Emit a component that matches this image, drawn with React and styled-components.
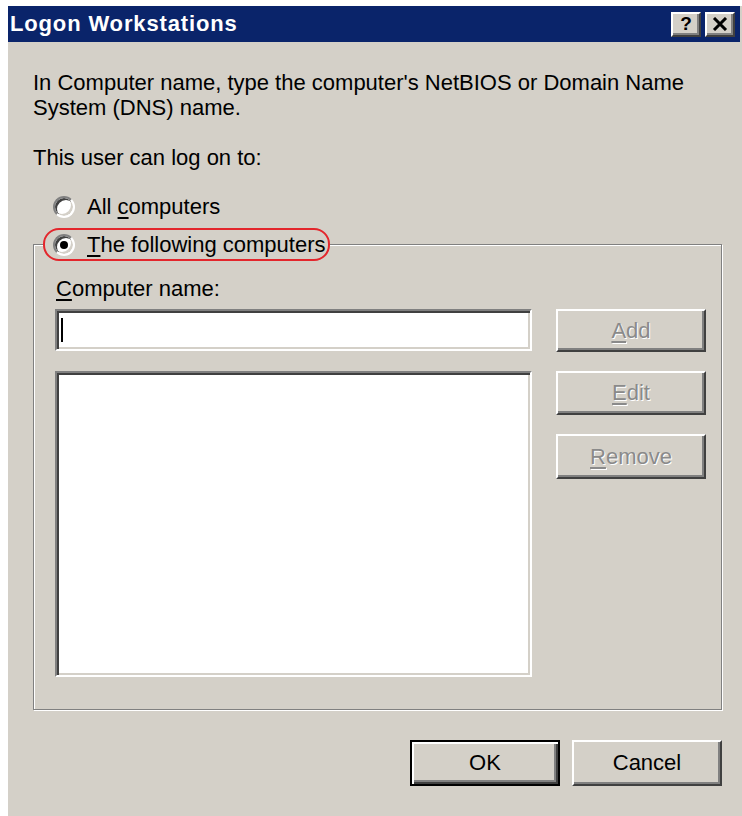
import React from 'react';
import styled, { createGlobalStyle, css } from 'styled-components';

const GlobalStyle = createGlobalStyle`
    html, body {
        margin: 0;
        padding: 0;
        background: #ffffff;
    }
    body {
        font-family: "Liberation Sans", Arial, sans-serif;
    }
`;

const face = '#d4d0c8';

const raised = css`
    border: 2px solid;
    border-color: #ffffff #404040 #404040 #ffffff;
    box-shadow: inset -2px -2px #808080;
`;

const sunken = css`
    border: 2px solid;
    border-color: #808080 #ffffff #ffffff #808080;
    box-shadow: inset 2px 2px #404040, inset -2px -2px ${face};
`;

const Window = styled.div`
    margin: 6px 0 0 8px;
    width: 734px;
    height: 810px;
    background: ${face};
    display: flex;
    flex-direction: column;
`;

const TitleBar = styled.div`
    height: 36px;
    background: #0a246a;
    display: flex;
    align-items: center;
    padding: 0 5px 0 2px;
    margin-right: 2px;
`;

const Title = styled.div`
    flex: 1;
    color: #ffffff;
    font-weight: bold;
    font-size: 22px;
    letter-spacing: 0.85px;
`;

const CaptionButton = styled.div`
    ${raised};
    width: 30px;
    height: 25px;
    box-sizing: border-box;
    background: ${face};
    display: flex;
    align-items: center;
    justify-content: center;
    margin-left: ${props => props.gap || 0}px;
    font-weight: bold;
    font-size: 19px;
    color: #000;
`;

const Body = styled.div`
    padding: 28px 20px 0 25px;
    display: flex;
    flex-direction: column;
    font-size: 22px;
    color: #000;
`;

const Text = styled.div`
    line-height: 25px;
    margin-bottom: ${props => props.mb || 0}px;
`;

const Key = styled.span`
    text-decoration: underline;
    text-underline-offset: 3px;
`;

const RadioRow = styled.label`
    display: flex;
    align-items: center;
    gap: 12px;
    height: ${props => props.h || 33}px;
    padding-left: ${props => props.indent || 0}px;
`;

const RadioDot = styled.span`
    width: 22px;
    height: 22px;
    box-sizing: border-box;
    border-radius: 50%;
    background: #fff;
    border: 2px solid;
    border-color: #808080 #ffffff #ffffff #808080;
    box-shadow: inset 2px 2px #404040, inset -2px -2px ${face};
    display: flex;
    align-items: center;
    justify-content: center;
    &::after {
        content: '';
        width: 8px;
        height: 8px;
        border-radius: 50%;
        background: ${props => props.checked ? '#000' : 'transparent'};
    }
`;

const Group = styled.fieldset`
    margin: 5px 0 0 0;
    padding: 0 15px 32px 21px;
    border: 1px solid #808080;
    box-shadow: inset 1px 1px #ffffff, 1px 1px #ffffff;
    min-width: 0;
`;

const Legend = styled.legend`
    margin-left: -12px;
    padding: 0 3px 0 0;
    border: 2px solid #e3262c;
    border-radius: 16px;
    background: ${face};
`;

const FieldLabel = styled.div`
    margin: 15px 0 7px 1px;
    line-height: 26px;
`;

const Columns = styled.div`
    display: flex;
    gap: 24px;
`;

const Fields = styled.div`
    width: 477px;
    display: flex;
    flex-direction: column;
    gap: 20px;
`;

const TextBox = styled.div`
    ${sunken};
    height: 42px;
    flex-shrink: 0;
    box-sizing: border-box;
    background: #fff;
    display: flex;
    align-items: center;
    padding-left: 4px;
`;

const Caret = styled.span`
    width: 2px;
    height: 24px;
    background: #000;
`;

const ListBox = styled.div`
    ${sunken};
    height: 306px;
    flex-shrink: 0;
    box-sizing: border-box;
    background: #fff;
`;

const Side = styled.div`
    display: flex;
    flex-direction: column;
    gap: 19px;
`;

const Button = styled.button`
    ${raised};
    width: 150px;
    height: ${props => props.h || 44}px;
    box-sizing: border-box;
    background: ${face};
    font-family: "Liberation Sans", Arial, sans-serif;
    font-size: 22px;
    color: ${props => props.disabled ? '#8a8a8a' : '#000'};
    text-shadow: ${props => props.disabled ? '1px 1px 0 #ffffff' : 'none'};
    padding: 0;
    cursor: default;
    ${props => props.primary && css`
        border-color: #000;
        box-shadow: inset 2px 2px #ffffff, inset -2px -2px #404040, inset -4px -4px #808080;
    `}
`;

const Footer = styled.div`
    display: flex;
    justify-content: flex-end;
    gap: 12px;
    margin-top: 30px;
`;

const CloseGlyph = () => (
    <svg width="16" height="14" viewBox="0 0 16 14">
        <path d="M2 1 L14 13 M14 1 L2 13" stroke="#000" strokeWidth="3" fill="none" />
    </svg>
);

export default function App() {
    return (
        <>
            <GlobalStyle />
            <Window>
                <TitleBar>
                    <Title>Logon Workstations</Title>
                    <CaptionButton>?</CaptionButton>
                    <CaptionButton gap={4}><CloseGlyph /></CaptionButton>
                </TitleBar>
                <Body>
                    <Text>In Computer name, type the computer's NetBIOS or Domain Name</Text>
                    <Text mb={25}>System (DNS) name.</Text>
                    <Text mb={20}>This user can log on to:</Text>
                    <RadioRow indent={20}>
                        <RadioDot />
                        <span>All <Key>c</Key>omputers</span>
                    </RadioRow>
                    <Group>
                        <Legend>
                            <RadioRow indent={8} h={29}>
                                <RadioDot checked />
                                <span><Key>T</Key>he following computers</span>
                            </RadioRow>
                        </Legend>
                        <FieldLabel><Key>C</Key>omputer name:</FieldLabel>
                        <Columns>
                            <Fields>
                                <TextBox><Caret /></TextBox>
                                <ListBox />
                            </Fields>
                            <Side>
                                <Button disabled h={43}><Key>A</Key>dd</Button>
                                <Button disabled h={44}><Key>E</Key>dit</Button>
                                <Button disabled h={45}><Key>R</Key>emove</Button>
                            </Side>
                        </Columns>
                    </Group>
                    <Footer>
                        <Button primary h={46}>OK</Button>
                        <Button h={46}>Cancel</Button>
                    </Footer>
                </Body>
            </Window>
        </>
    );
}
